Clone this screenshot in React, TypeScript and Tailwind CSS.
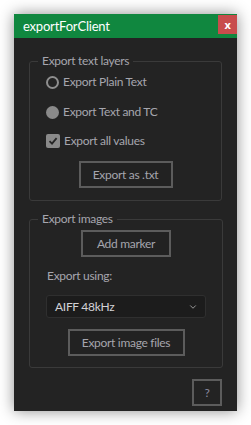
import { ChevronDown } from "lucide-react";

function Radio({ checked, label }: { checked?: boolean; label: string }) {
  return (
    <div className="flex h-[20px] items-center gap-[4px]">
      {checked ? (
        <div className="h-[13px] w-[13px] rounded-full bg-[#8a8a8a]" />
      ) : (
        <div className="h-[13px] w-[13px] rounded-full border-2 border-[#8e8e8e]" />
      )}
      <span>{label}</span>
    </div>
  );
}

function Btn({ label, w }: { label: string; w: string }) {
  return (
    <div
      className={`mx-auto flex h-[27px] ${w} items-center justify-center border-2 border-[#5c5c5c] bg-[#222222] text-[#a5a5ad]`}
    >
      {label}
    </div>
  );
}

export default function App() {
  return (
    <div className="h-[425px] w-[251px] bg-white pl-[14px] pt-[14px] font-['Lato',sans-serif] text-[12px] leading-[16px] tracking-[-0.3px] text-[#a6a6ae]">
      <div className="flex h-[397px] w-[223px] flex-col bg-[#232323] shadow-[0_0_14px_rgba(0,0,0,0.45)]">
        {/* title bar */}
        <div className="flex h-[24px] items-start bg-[#10873f]">
          <span className="pl-[9px] pt-[3px] text-[13px] leading-[18px] tracking-[-0.2px] text-white">exportForClient</span>
          <div className="ml-auto mt-[1px] flex h-[19px] w-[19px] items-center justify-center bg-[#c84c4c] font-['Open_Sans',sans-serif] text-[11px] font-bold leading-none text-white">
            x
          </div>
        </div>

        <div className="flex flex-1 flex-col px-[15px] pt-[15px]">
          {/* group 1 */}
          <fieldset className="rounded-[3px] border border-[#3a3a3a] px-[16px] pb-[12px]">
            <legend className="-ml-[8px] px-[4px]">Export text layers</legend>
            <div className="mt-[3px] flex flex-col">
              <Radio label="Export Plain Text" />
              <div className="mt-[10px]">
                <Radio checked label="Export Text and TC" />
              </div>
              <div className="mt-[9px] flex h-[20px] items-center gap-[4px]">
                <div className="flex h-[14px] w-[14px] items-center justify-center rounded-[2px] bg-[#8a8a8a]">
                  <svg width="10" height="10" viewBox="0 0 10 10">
                    <path d="M1.5 5.2 L4 7.6 L8.6 2.2" fill="none" stroke="#262626" strokeWidth="1.8" />
                  </svg>
                </div>
                <span>Export all values</span>
              </div>
            </div>
            <div className="mt-[10px]">
              <Btn label="Export as .txt" w="w-[94px]" />
            </div>
          </fieldset>

          {/* group 2 */}
          <fieldset className="mt-[10px] rounded-[3px] border border-[#3a3a3a] px-[16px] pb-[11px]">
            <legend className="-ml-[8px] px-[4px]">Export images</legend>
            <div className="mt-[3px]">
              <Btn label="Add marker" w="w-[90px]" />
            </div>
            <div className="mt-[11px] pl-[1px]">Export using:</div>
            <div className="mt-[11px] flex h-[23px] w-[160px] items-center rounded-[3px] border border-[#2f2f2f] bg-[#1c1c1c] pl-[8px] pr-[7px] text-[#d2d2d6]">
              <span>AIFF 48kHz</span>
              <ChevronDown className="ml-auto h-[10px] w-[10px] text-[#b0b0b0]" strokeWidth={2} />
            </div>
            <div className="mt-[11px]">
              <Btn label="Export image files" w="w-[117px]" />
            </div>
          </fieldset>

          <div className="mt-[11px] flex justify-end">
            <div className="flex h-[27px] w-[30px] items-center justify-center border-2 border-[#5c5c5c] text-[#8a8aa0]">
              ?
            </div>
          </div>
        </div>
      </div>
    </div>
  );
}
